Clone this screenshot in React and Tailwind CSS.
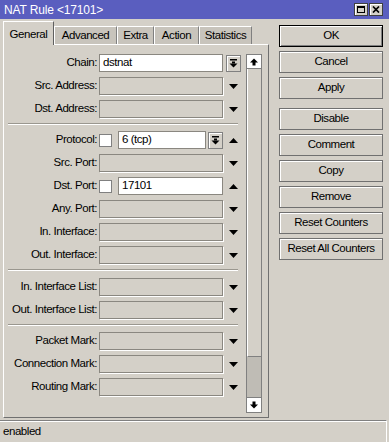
import React from "react";

const font = "font-['Liberation_Sans',Arial,sans-serif] text-[11.5px] tracking-[-0.45px] text-black";

function Tri({ up }) {
  return (
    <svg width="9" height="5" viewBox="0 0 9 5">
      <path d={up ? "M4.5 0L9 5H0z" : "M0 0h9L4.5 5z"} fill="#000" />
    </svg>
  );
}

function ComboBtn() {
  return (
    <div className="w-[15px] h-[17px] flex items-center justify-center border border-[#808080] bg-[#d4d0c8] shadow-[inset_1px_1px_0_#fff]">
      <svg width="9" height="9" viewBox="0 0 9 9" fill="#000">
        <rect x="1" y="0" width="7" height="1.5" />
        <rect x="3" y="2.5" width="3" height="2" />
        <path d="M0.5 4.5h8L4.5 8.5z" />
      </svg>
    </div>
  );
}

function ScrollArrow({ up }) {
  return (
    <svg width="8" height="8" viewBox="0 0 8 8" fill="#000">
      <path d={up ? "M4 0.5L8 4.5H5.5V7.5H2.5V4.5H0z" : "M4 7.5L8 3.5H5.5V0.5H2.5V3.5H0z"} />
    </svg>
  );
}

function Empty() {
  return <div className="w-[124px] h-[18px] border border-[#8a8780] bg-[#d4d0c8] shadow-[1px_1px_0_#fff]" />;
}

function Row({ label, children, trail }) {
  return (
    <div className="flex h-[23px] items-start">
      <div className="w-[93px] h-[18px] flex items-center justify-end whitespace-nowrap">{label}</div>
      <div className="ml-[2px] w-[124px] h-[18px] flex items-center">{children || <Empty />}</div>
      <div className="ml-[2px] w-[17px] h-[18px] flex items-center justify-center">
        {trail === undefined ? <Tri /> : trail}
      </div>
    </div>
  );
}

function Sep() {
  return <div className="mx-[4px] h-[2px] border-t border-[#9a978f] border-b border-b-white" />;
}

function Check() {
  return <div className="w-[13px] h-[13px] bg-white border border-[#808080] shrink-0" />;
}

function Btn({ children, def }) {
  return (
    <div
      className={
        "h-[22px] flex items-center justify-center bg-[#d4d0c8] " +
        (def
          ? "border border-black shadow-[inset_1px_1px_0_#fff,inset_-1px_-1px_0_#808080]"
          : "border border-[#707070] shadow-[inset_1px_1px_0_#fff]")
      }
    >
      {children}
    </div>
  );
}

const tabs = [
  ["General", "w-[51px]"],
  ["Advanced", "w-[63px]"],
  ["Extra", "w-[37px]"],
  ["Action", "w-[45px]"],
  ["Statistics", "w-[53px]"],
];

export default function App() {
  return (
    <div className={"w-[389px] h-[442px] bg-[#d4d0c8] flex flex-col overflow-hidden " + font}>
      <div className="h-[19px] bg-[#5a5ebf] flex items-center px-[4px] text-white">
        <span className="text-[12px] tracking-[-0.15px]">NAT Rule &lt;17101&gt;</span>
        <div className="ml-auto flex gap-[1px] mr-[2px]">
          <div className="w-[14px] h-[13px] bg-[#d4d0c8] border border-[#404040] shadow-[inset_1px_1px_0_#fff] flex items-center justify-center">
            <div className="w-[8px] h-[7px] border border-black border-t-2" />
          </div>
          <div className="w-[14px] h-[13px] bg-[#d4d0c8] border border-[#404040] shadow-[inset_1px_1px_0_#fff] flex items-center justify-center">
            <svg width="8" height="7" viewBox="0 0 8 7">
              <path d="M1 0.5L7 6.5M7 0.5L1 6.5" stroke="#000" strokeWidth="1.7" />
            </svg>
          </div>
        </div>
      </div>

      <div className="flex-1 flex">
        <div className="ml-[3px] w-[266px] flex flex-col pt-[2px] mb-[2px]">
          <div className="flex items-end h-[24px] -mb-px relative z-10">
            {tabs.map(([t, w], i) =>
              i === 0 ? (
                <div key={t} className={w + " h-[24px] bg-[#d4d0c8] border-l border-t border-white border-r border-r-[#606060] flex items-start justify-center pt-[4px]"}>
                  {t}
                </div>
              ) : (
                <div key={t} className={w + " h-[18px] mb-[1px] bg-[#c8c4bc] border-l border-t border-white border-r border-r-[#808080] flex items-center justify-center"}>
                  {t}
                </div>
              )
            )}
          </div>
          <div className="flex-1 flex border-t border-l border-white border-r border-r-[#707070] border-b border-b-[#707070]">
            <div className="flex flex-col pt-[9px]">
              <Row label="Chain:" trail={<ComboBtn />}>
                <div className="w-[124px] h-[18px] border border-[#8a8780] bg-white px-[3px] flex items-center">dstnat</div>
              </Row>
              <Row label="Src. Address:" />
              <Row label="Dst. Address:" />
              <Sep />
              <div className="mt-[6px]">
                <Row label="Protocol:" trail={<Tri up />}>
                  <Check />
                  <div className="ml-[6px] w-[88px] h-[18px] border border-[#8a8780] bg-white px-[3px] flex items-center">6 (tcp)</div>
                  <div className="ml-[2px]">
                    <ComboBtn />
                  </div>
                </Row>
                <Row label="Src. Port:" />
                <Row label="Dst. Port:" trail={<Tri up />}>
                  <Check />
                  <div className="ml-[6px] w-[105px] h-[18px] border border-[#8a8780] bg-white px-[3px] flex items-center">17101</div>
                </Row>
                <Row label="Any. Port:" />
                <Row label="In. Interface:" />
                <Row label="Out. Interface:" />
              </div>
              <Sep />
              <div className="mt-[7px]">
                <Row label="In. Interface List:" />
                <Row label="Out. Interface List:" />
              </div>
              <Sep />
              <div className="mt-[6px]">
                <Row label="Packet Mark:" />
                <Row label="Connection Mark:" />
                <Row label="Routing Mark:" />
              </div>
            </div>
            <div className="ml-[4px] mt-[9px] mb-[4px] w-[16px] flex flex-col border border-[#808080]">
              <div className="h-[14px] bg-white border-b border-[#808080] flex items-center justify-center">
                <ScrollArrow up />
              </div>
              <div className="h-[288px] bg-[#d4d0c8] border-l border-white border-b border-b-[#808080]" />
              <div className="flex-1 bg-[#bfbcb5]" />
              <div className="h-[15px] bg-white border-t border-[#808080] flex items-center justify-center">
                <ScrollArrow />
              </div>
            </div>
          </div>
        </div>

        <div className="ml-[10px] w-[104px] pt-[6px] flex flex-col gap-[4px]">
          <Btn def>OK</Btn>
          <Btn>Cancel</Btn>
          <Btn>Apply</Btn>
          <div className="mt-[5px]">
            <Btn>Disable</Btn>
          </div>
          <Btn>Comment</Btn>
          <Btn>Copy</Btn>
          <Btn>Remove</Btn>
          <Btn>Reset Counters</Btn>
          <Btn>Reset All Counters</Btn>
        </div>
      </div>

      <div className="h-[22px] mr-[2px] border-t border-[#808080] shadow-[inset_0_1px_0_#fff] border-r border-r-white flex items-center px-[3px]">
        enabled
      </div>
    </div>
  );
}
